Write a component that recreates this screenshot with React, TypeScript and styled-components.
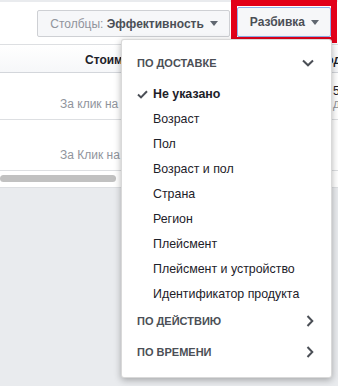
import React from "react";
import styled, { createGlobalStyle } from "styled-components";

const GlobalStyle = createGlobalStyle`
	html, body {
		margin: 0;
		padding: 0;
		background: #e9ebee;
		font-family: "Liberation Sans", Arial, sans-serif;
	}
`;

const Page = styled.div`
	position: relative;
	width: 338px;
	height: 386px;
	overflow: hidden;
	background: #e9ebee;
`;

const Toolbar = styled.div`
	display: flex;
	justify-content: flex-end;
	align-items: flex-start;
	gap: 1px;
	height: 45px;
	box-sizing: border-box;
	padding-right: 1px;
	background: linear-gradient(#e9ebee 0 2px, #fff 2px);
	border-bottom: 1px solid #dddfe2;
`;

const Button = styled.button<{ $focused?: boolean }>`
	display: flex;
	align-items: center;
	gap: 6px;
	height: ${(p) => (p.$focused ? "30px" : "27px")};
	margin-top: ${(p) => (p.$focused ? "0" : "10px")};
	padding: 0 11px 0 12px;
	box-sizing: border-box;
	border: 1px solid ${(p) => (p.$focused ? "#8fb0ec" : "#ced0d4")};
	border-radius: 2px;
	background: #f6f7f9;
	font-family: inherit;
	font-size: 12px;
	font-weight: bold;
	color: #4b4f56;
	white-space: nowrap;
`;

const Muted = styled.span`
	color: #90949c;
	font-weight: normal;
`;

const Caret = styled.span`
	width: 0;
	height: 0;
	border-left: 4px solid transparent;
	border-right: 4px solid transparent;
	border-top: 5px solid #606770;
`;

const RedFrame = styled.div`
	display: flex;
	height: 43px;
	box-sizing: border-box;
	padding-top: 1px;
	border: 6px solid #e2001a;
`;

const Table = styled.div`
	background: #fff;
	overflow: hidden;
`;

const Row = styled.div<{ $h: number; $head?: boolean }>`
	display: flex;
	width: 560px;
	height: ${(p) => p.$h}px;
	box-sizing: border-box;
	border-bottom: 1px solid ${(p) => (p.$head ? "#d3d6db" : "#dddfe2")};
	background: ${(p) => (p.$head ? "linear-gradient(#fff, #f6f7f9)" : "#fff")};
`;

const Cell = styled.div<{ $w: number; $inset: number }>`
	display: flex;
	flex-direction: column;
	justify-content: flex-end;
	width: ${(p) => p.$w}px;
	box-sizing: border-box;
	padding: 0 0 9px ${(p) => p.$inset}px;
	white-space: nowrap;
	overflow: hidden;
`;

const HeadText = styled.div`
	font-size: 12px;
	font-weight: bold;
	color: #1d2129;
	line-height: 14px;
	margin-bottom: -4px;
`;

const Value = styled.div`
	font-size: 12px;
	color: #1d2129;
	line-height: 13px;
`;

const Sub = styled.div`
	font-size: 12px;
	color: #90949c;
	line-height: 12px;
`;

const Track = styled.div`
	display: flex;
	align-items: center;
	height: 17px;
	box-sizing: border-box;
	border-bottom: 1px solid #dddfe2;
	background: #fff;
`;

const Thumb = styled.div`
	width: 116px;
	height: 7px;
	border-radius: 4px;
	background: #c1c1c1;
	margin-top: -1px;
`;

const Menu = styled.div`
	position: absolute;
	top: 39px;
	left: 121px;
	width: 211px;
	height: 339px;
	box-sizing: border-box;
	padding: 7px 0 9px;
	background: #fff;
	border: 1px solid rgba(0, 0, 0, 0.15);
	border-radius: 3px;
	box-shadow: 0 2px 7px rgba(0, 0, 0, 0.3);
`;

const Section = styled.div<{ $h: number }>`
	display: flex;
	align-items: center;
	justify-content: space-between;
	height: ${(p) => p.$h}px;
	padding: 0 17px 0 15px;
	font-size: 11px;
	font-weight: bold;
	color: #4b4f56;
	text-transform: uppercase;
`;

const List = styled.div`
	padding-top: 2px;
`;

const Item = styled.div<{ $active?: boolean }>`
	position: relative;
	display: flex;
	align-items: center;
	height: 25px;
	padding-left: 31px;
	font-size: 12.4px;
	font-weight: ${(p) => (p.$active ? "bold" : "normal")};
	color: #1d2129;
	white-space: nowrap;

	& > svg {
		position: absolute;
		left: 15px;
		top: 9px;
	}
`;

const Check = () => (
	<svg width="11" height="9" viewBox="0 0 11 9">
		<path d="M1 4.6 L4 7.4 L10 1.2" fill="none" stroke="#4b4f56" strokeWidth="2" />
	</svg>
);

const ChevronDown = () => (
	<svg width="12" height="8" viewBox="0 0 12 8">
		<path d="M1 1.5 L6 6.3 L11 1.5" fill="none" stroke="#4b4f56" strokeWidth="2" />
	</svg>
);

const ChevronRight = () => (
	<svg width="8" height="12" viewBox="0 0 8 12">
		<path d="M1.5 1 L6.3 6 L1.5 11" fill="none" stroke="#4b4f56" strokeWidth="2" />
	</svg>
);

const options = [
	"Возраст",
	"Пол",
	"Возраст и пол",
	"Страна",
	"Регион",
	"Плейсмент",
	"Плейсмент и устройство",
	"Идентификатор продукта",
];

const App = () => (
	<Page>
		<GlobalStyle />
		<Toolbar>
			<Button>
				<span>
					<Muted>Столбцы: </Muted>Эффективность
				</span>
				<Caret />
			</Button>
			<RedFrame>
				<Button $focused>
					Разбивка
					<Caret />
				</Button>
			</RedFrame>
		</Toolbar>
		<Table>
			<Row $h={28} $head>
				<Cell $w={314} $inset={85}>
					<HeadText>Стоимость за результат</HeadText>
				</Cell>
				<Cell $w={246} $inset={6}>
					<HeadText>Годовой бюджет</HeadText>
				</Cell>
			</Row>
			<Row $h={47}>
				<Cell $w={314} $inset={60}>
					<Value>&nbsp;</Value>
					<Sub>За клик на ссылку</Sub>
				</Cell>
				<Cell $w={246} $inset={19}>
					<Value>5</Value>
					<Sub>дней</Sub>
				</Cell>
			</Row>
			<Row $h={51}>
				<Cell $w={314} $inset={60}>
					<Value>&nbsp;</Value>
					<Sub>За Клик на ссылку</Sub>
				</Cell>
				<Cell $w={246} $inset={19} />
			</Row>
			<Track>
				<Thumb />
			</Track>
		</Table>
		<Menu>
			<Section $h={32}>
				По доставке
				<ChevronDown />
			</Section>
			<List>
				<Item $active>
					<Check />
					Не указано
				</Item>
				{options.map((o) => (
					<Item key={o}>{o}</Item>
				))}
			</List>
			<Section $h={30}>
				По действию
				<ChevronRight />
			</Section>
			<Section $h={32}>
				По времени
				<ChevronRight />
			</Section>
		</Menu>
	</Page>
);

export default App;
